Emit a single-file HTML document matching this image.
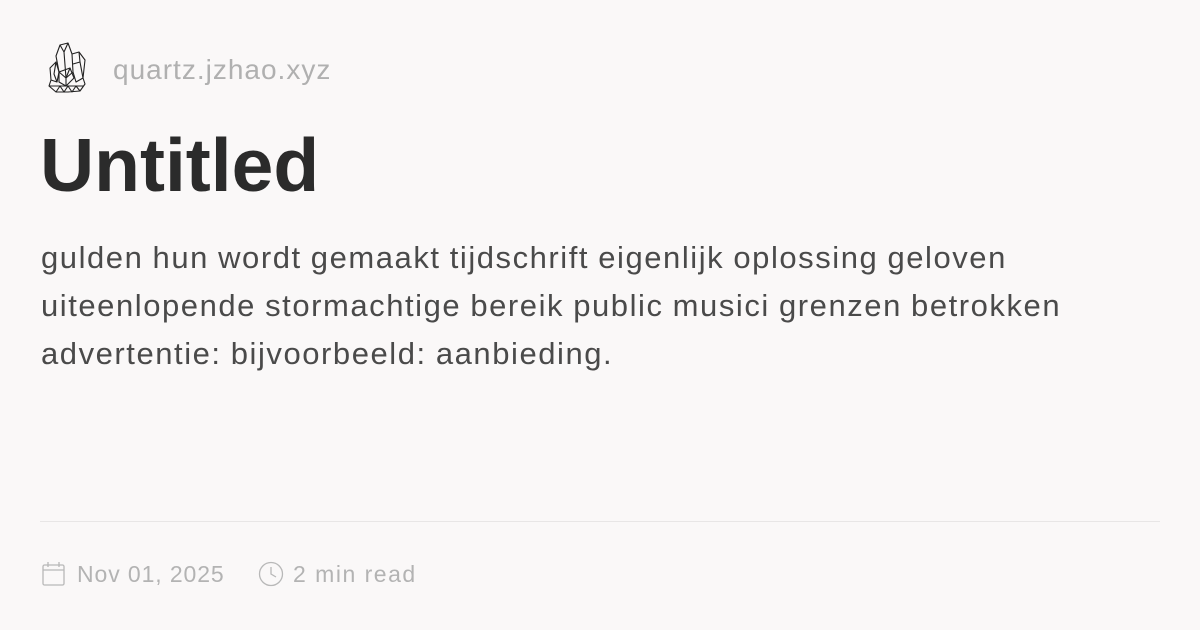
<!DOCTYPE html>
<html><head><meta charset="utf-8"><style>
html,body{margin:0;padding:0;}
body{width:1200px;height:630px;background:#faf8f8;position:relative;overflow:hidden;font-family:"Liberation Sans",sans-serif;}
.logo{position:absolute;left:46px;top:42px;}
.site{position:absolute;left:113px;top:52px;font-size:28px;color:#b0b0b0;line-height:36px;letter-spacing:1px;}
.title{position:absolute;left:40px;top:120px;font-size:75px;font-weight:bold;color:#2b2b2b;line-height:90px;}
.desc{position:absolute;left:41px;top:234px;font-size:31px;color:#4a4a4a;line-height:48px;white-space:nowrap;letter-spacing:1.55px;word-spacing:-1px;}
.hr{position:absolute;left:40px;right:40px;top:521px;height:1px;background:#e8e6e6;}
.foot{position:absolute;top:558px;font-size:23px;color:#b3b3b3;line-height:32px;}
</style></head><body>
<svg class="logo" width="42" height="52" viewBox="0 0 42 52" fill="none" stroke="#222" stroke-width="1.1" stroke-linejoin="round">
<path d="M14 3 L22 1 L26 12 L27 30 L20 36 L13 30 L10 14 Z"/>
<path d="M14 3 L18 10 L22 1 M18 10 L20 36"/>
<path d="M26 12 L33 10 L39 18 L37 36 L30 40 L27 30"/>
<path d="M33 10 L34 20 L37 36 M34 20 L27 22"/>
<path d="M4 26 L10 20 L13 30 L11 40 L5 38 Z M10 20 L8 32 L11 40"/>
<path d="M13 30 L24 26 L28 36 L20 44 L13 40 Z M24 26 L20 36 L20 44"/>
<path d="M5 38 L3 44 L10 50 L22 50 L34 49 L39 42 L37 36 M3 44 L38 44 M10 50 L14 44 L18 50 L22 44 L26 50 L30 44 L34 49"/>
</svg>
<div class="site">quartz.jzhao.xyz</div>
<div class="title">Untitled</div>
<div class="desc">gulden hun wordt gemaakt tijdschrift eigenlijk oplossing geloven<br>uiteenlopende stormachtige bereik public musici grenzen betrokken<br>advertentie: bijvoorbeeld: aanbieding.</div>
<div class="hr"></div>
<svg style="position:absolute;left:42px;top:561px" width="24" height="25" viewBox="0 0 24 25" fill="none" stroke="#b8b8b8" stroke-width="1.3">
<rect x="1" y="4" width="21" height="20" rx="1.5"/><path d="M1 9 H22 M6 1 V6 M17 1 V6"/></svg>
<div class="foot" style="left:77px;letter-spacing:0.9px">Nov 01, 2025</div>
<svg style="position:absolute;left:258px;top:561px" width="26" height="26" viewBox="0 0 26 26" fill="none" stroke="#b8b8b8" stroke-width="1.3">
<circle cx="13" cy="13" r="11.5"/><path d="M13 6 V13 L18 16"/></svg>
<div class="foot" style="left:293px;letter-spacing:1.5px">2 min read</div>
</body></html>
